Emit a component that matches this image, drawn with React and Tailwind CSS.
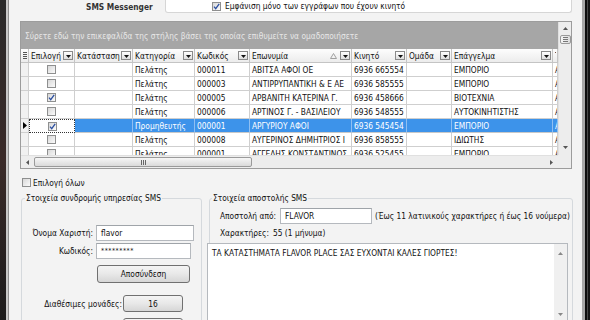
import React from "react";

const rows = [
  { chk: false, cat: "Πελάτης", code: "000011", name: "ΑΒΙΤΣΑ ΑΦΟΙ ΟΕ", mob: "6936 665554", job: "ΕΜΠΟΡΙΟ" },
  { chk: false, cat: "Πελάτης", code: "000003", name: "ΑΝΤΙΡΡΥΠΑΝΤΙΚΗ & Ε  ΑΕ", mob: "6936 585555", job: "ΕΜΠΟΡΙΟ" },
  { chk: true, cat: "Πελάτης", code: "000005", name: "ΑΡΒΑΝΙΤΗ ΚΑΤΕΡΙΝΑ Γ.", mob: "6936 458666", job: "ΒΙΟΤΕΧΝΙΑ" },
  { chk: false, cat: "Πελάτης", code: "000006", name: "ΑΡΤΙΝΟΣ Γ. - ΒΑΣΙΛΕΙΟΥ", mob: "6936 548555", job: "ΑΥΤΟΚΙΝΗΤΙΣΤΗΣ" },
  { chk: true, cat: "Προμηθευτής", code: "000001", name: "ΑΡΓΥΡΙΟΥ ΑΦΟΙ", mob: "6936 545454", job: "ΕΜΠΟΡΙΟ", sel: true },
  { chk: false, cat: "Πελάτης", code: "000008", name: "ΑΥΓΕΡΙΝΟΣ ΔΗΜΗΤΡΙΟΣ Ι", mob: "6936 858555", job: "ΙΔΙΩΤΗΣ" },
  { chk: false, cat: "Πελάτης", code: "000001", name: "ΑΓΓΕΛΗΣ ΚΩΝΣΤΑΝΤΙΝΟΣ", mob: "6936 525455", job: "ΕΜΠΟΡΙΟ" },
];

function Check({ checked }) {
  return (
    <span className="w-[9px] h-[9px] shrink-0 border border-[#8e8f8f] bg-linear-to-br from-[#d8d8d8] to-[#fbfbfb] flex items-center justify-center">
      {checked && (
        <svg width="7" height="7" viewBox="0 0 7 7">
          <path d="M1 3.6 L2.7 5.6 L6.2 0.8" stroke="#2b4fa0" strokeWidth="1.3" fill="none" />
        </svg>
      )}
    </span>
  );
}

function DropBtn() {
  return (
    <span className="w-[10px] h-[9px] shrink-0 border border-[#8a8a8a] bg-linear-to-b from-white to-[#dedede] flex items-end justify-center pb-[1px]">
      <svg width="5" height="3" viewBox="0 0 5 3">
        <path d="M0 0h5L2.5 3z" fill="#111" />
      </svg>
    </span>
  );
}

function Head({ w, label, sort }) {
  return (
    <div className={`${w} shrink-0 h-full border-r border-b border-[#c4c4c4] bg-linear-to-b from-[#fdfdfd] to-[#ececec] flex items-center pl-[2px] pr-[1px] overflow-hidden whitespace-nowrap`}>
      <span className="flex-1 overflow-hidden">{label}</span>
      {sort && (
        <svg width="7" height="6" viewBox="0 0 7 6" className="mr-[3px]">
          <path d="M3.5 0.5 L6.5 5.5 H0.5 Z" stroke="#a0a0a0" fill="none" />
        </svg>
      )}
      {label !== "Τ" && <DropBtn />}
    </div>
  );
}

function Cell({ w, sel, children }) {
  return (
    <div
      className={`${w} shrink-0 h-full border-r border-b overflow-hidden whitespace-nowrap pl-[2px] flex items-center ${
        sel ? "bg-[#3d93ea] text-white border-r-[#8fbff2] border-b-[#c8c8c8]" : "border-[#cfcfcf]"
      }`}
    >
      {children}
    </div>
  );
}

function Button({ children, className }) {
  return (
    <div className={`${className} border border-[#707070] rounded-[3px] bg-linear-to-b from-[#f4f4f4] via-[#e8e8e8] to-[#d6d6d6] flex items-center justify-center text-[#111]`}>
      {children}
    </div>
  );
}

export default function App() {
  return (
    <div className="w-[590px] h-[320px] overflow-hidden flex bg-[#111] font-['DejaVu_Sans_Condensed','DejaVu_Sans',sans-serif] text-[8.3px] leading-[10px] text-[#111]">
      {/* left desktop edge */}
      <div className="w-[6px] bg-linear-to-b from-[#2a2a2a] via-[#3a2a28] to-[#1c1c1c]" />
      <div className="w-[3px] bg-[#c9c9c9] border-r border-[#8f8f8f]" />

      {/* window body */}
      <div className="w-[573px] bg-[#f3f3f3] flex flex-col pl-[11px]">
        {/* top bar */}
        <div className="h-[13px] flex items-start">
          <div className="ml-[66px] w-[79px] h-[13px] flex items-center font-bold text-[#333] whitespace-nowrap">SMS Messenger</div>
          <div className="w-[407px] h-[13px] bg-white border-x border-b border-[#d6d6d6] rounded-b-[3px] flex items-center pl-[46px] gap-[4px]">
            <Check checked />
            <span>Εμφάνιση μόνο των εγγράφων που έχουν κινητό</span>
          </div>
        </div>

        {/* grid */}
        <div className="mt-[8px] w-[552px] h-[148px] border border-[#9c9c9c] bg-white flex flex-col">
          <div className="flex h-[133px]">
            <div className="w-[537px] flex flex-col overflow-hidden">
              <div className="h-[27px] shrink-0 bg-[#a6a6a6] text-[#e6e6e6] flex items-center pl-[4px] whitespace-nowrap">
                Σύρετε εδώ την επικεφαλίδα της στήλης βάσει της οποίας επιθυμείτε να ομαδοποιήσετε
              </div>
              <div className="h-[14px] shrink-0 flex">
                <div className="w-[8px] shrink-0 h-full border-r border-b border-[#c4c4c4] bg-linear-to-b from-[#fdfdfd] to-[#ececec] flex flex-col justify-center items-center gap-[1px]">
                  <span className="w-[4px] h-[1px] bg-[#555]" />
                  <span className="w-[4px] h-[1px] bg-[#555]" />
                  <span className="w-[4px] h-[1px] bg-[#555]" />
                  <span className="w-[4px] h-[1px] bg-[#555]" />
                </div>
                <Head w="w-[46px]" label="Επιλογή" />
                <Head w="w-[58px]" label="Κατάσταση" />
                <Head w="w-[62px]" label="Κατηγορία" />
                <Head w="w-[55px]" label="Κωδικός" />
                <Head w="w-[102px]" label="Επωνυμία" sort />
                <Head w="w-[55px]" label="Κινητό" />
                <Head w="w-[45px]" label="Ομάδα" />
                <Head w="w-[101px]" label="Επάγγελμα" />
                <Head w="w-[5px]" label="Τ" />
              </div>
              {rows.map((r, i) => (
                <div key={i} className="h-[14px] shrink-0 flex">
                  <div className="w-[8px] shrink-0 h-full border-r border-b border-[#cfcfcf] bg-[#f1f1f1] flex items-center justify-center">
                    {r.sel && (
                      <svg width="4" height="7" viewBox="0 0 4 7">
                        <path d="M0 0 L4 3.5 L0 7 Z" fill="#000" />
                      </svg>
                    )}
                  </div>
                  <div
                    className={`w-[46px] shrink-0 h-full flex items-center justify-center ${
                      r.sel ? "border border-dotted border-[#333]" : "border-r border-b border-[#cfcfcf]"
                    }`}
                  >
                    <Check checked={r.chk} />
                  </div>
                  <Cell w="w-[58px]" sel={r.sel} />
                  <Cell w="w-[62px]" sel={r.sel}>{r.cat}</Cell>
                  <Cell w="w-[55px]" sel={r.sel}>{r.code}</Cell>
                  <Cell w="w-[102px]" sel={r.sel}>{r.name}</Cell>
                  <Cell w="w-[55px]" sel={r.sel}>{r.mob}</Cell>
                  <Cell w="w-[45px]" sel={r.sel} />
                  <Cell w="w-[101px]" sel={r.sel}>{r.job}</Cell>
                  <Cell w="w-[5px]" sel={r.sel}>Α</Cell>
                </div>
              ))}
            </div>
            {/* vertical scrollbar */}
            <div className="w-[13px] bg-[#ededed] border-l border-[#e0e0e0] flex flex-col items-center">
              <svg width="5" height="3" viewBox="0 0 5 3" className="mt-[5px]">
                <path d="M0 3h5L2.5 0z" fill="#555" />
              </svg>
              <div className="mt-[5px] w-[11px] h-[9px] border border-[#9a9a9a] rounded-[2px] bg-linear-to-r from-[#f6f6f6] to-[#dcdcdc] flex flex-col items-center justify-center gap-[1px]">
                <span className="w-[5px] h-[1px] bg-[#777]" />
                <span className="w-[5px] h-[1px] bg-[#777]" />
                <span className="w-[5px] h-[1px] bg-[#777]" />
              </div>
              <div className="flex-1" />
              <svg width="5" height="3" viewBox="0 0 5 3" className="mb-[6px]">
                <path d="M0 0h5L2.5 3z" fill="#555" />
              </svg>
            </div>
          </div>
          {/* horizontal scrollbar */}
          <div className="flex h-[13px]">
            <div className="w-[537px] bg-[#ededed] border-t border-[#e0e0e0] flex items-center">
              <svg width="3" height="5" viewBox="0 0 3 5" className="ml-[5px]">
                <path d="M3 0v5L0 2.5z" fill="#555" />
              </svg>
              <div className="ml-[5px] w-[218px] h-[10px] border border-[#9a9a9a] rounded-[2px] bg-linear-to-b from-[#f6f6f6] to-[#dadada] flex items-center justify-center gap-[1px]">
                <span className="w-[1px] h-[5px] bg-[#666]" />
                <span className="w-[1px] h-[5px] bg-[#666]" />
                <span className="w-[1px] h-[5px] bg-[#666]" />
              </div>
              <div className="flex-1" />
              <svg width="3" height="5" viewBox="0 0 3 5" className="mr-[5px]">
                <path d="M0 0v5L3 2.5z" fill="#555" />
              </svg>
            </div>
            <div className="w-[13px] bg-[#ededed]" />
          </div>
        </div>

        {/* select all */}
        <div className="mt-[9px] ml-[2px] flex items-center gap-[2px] h-[9px]">
          <Check />
          <span>Επιλογή όλων</span>
        </div>

        {/* group boxes */}
        <div className="mt-[6px] flex gap-[7px] ml-[1px]">
          <fieldset className="w-[181px] h-[140px] border border-[#d5d9dd] rounded-[3px] shrink-0">
            <legend className="ml-[3px] px-[1px] leading-[10px]">Στοιχεία συνδρομής υπηρεσίας SMS</legend>
            <div className="mt-[22px] flex items-center">
              <div className="w-[71px] text-right">Όνομα Χαριστή:</div>
              <div className="ml-[3px] w-[98px] h-[16px] border border-[#b5b9be] border-t-[#9fa4a9] bg-white flex items-center pl-[4px]">flavor</div>
            </div>
            <div className="mt-[2px] flex items-center">
              <div className="w-[71px] text-right">Κωδικός:</div>
              <div className="ml-[3px] w-[95px] h-[16px] border border-[#b5b9be] border-t-[#9fa4a9] bg-white flex items-center pl-[4px] text-[7px] tracking-[0.5px]">*********</div>
            </div>
            <Button className="mt-[6px] ml-[75px] w-[93px] h-[18px]">Αποσύνδεση</Button>
            <div className="mt-[12px] flex items-center">
              <div className="w-[100px] text-right whitespace-nowrap">Διαθέσιμες μονάδες:</div>
              <Button className="ml-[1px] w-[60px] h-[17px]">16</Button>
            </div>
            <div className="mt-[6px] flex items-center">
              <div className="w-[100px] text-right whitespace-nowrap">Κόστος μηνύματος:</div>
              <Button className="ml-[1px] w-[60px] h-[17px]">1</Button>
            </div>
          </fieldset>

          <fieldset className="w-[364px] h-[140px] border border-[#d5d9dd] rounded-[3px] shrink-0">
            <legend className="ml-[2px] px-[1px] leading-[10px]">Στοιχεία αποστολής SMS</legend>
            <div className="mt-[5px] flex items-center pl-[10px] whitespace-nowrap">
              <div className="w-[60px]">Αποστολή από:</div>
              <div className="w-[92px] h-[16px] border border-[#b5b9be] border-t-[#9fa4a9] bg-white flex items-center pl-[4px]">FLAVOR</div>
              <div className="ml-[3px]">(Έως 11 λατινικούς χαρακτήρες ή έως 16 νούμερα)</div>
            </div>
            <div className="mt-[4px] flex items-center pl-[10px] h-[10px] whitespace-nowrap">
              <div className="w-[53px]">Χαρακτήρες:</div>
              <div>55 (1 μήνυμα)</div>
            </div>
            <div className="mt-[5px] ml-[-3px] w-[361px] h-[90px] border border-[#b5b9be] bg-white flex">
              <div className="flex-1 pl-[4px] pt-[4px]">ΤΑ ΚΑΤΑΣΤΗΜΑΤΑ FLAVOR PLACE ΣΑΣ ΕΥΧΟΝΤΑΙ ΚΑΛΕΣ ΓΙΟΡΤΕΣ!</div>
              <div className="w-[13px] bg-[#f0f0f0] flex flex-col items-center">
                <svg width="5" height="3" viewBox="0 0 5 3" className="mt-[8px]">
                  <path d="M0 3h5L2.5 0z" fill="#888" />
                </svg>
                <svg width="5" height="3" viewBox="0 0 5 3" className="mt-[58px]">
                  <path d="M0 0h5L2.5 3z" fill="#888" />
                </svg>
              </div>
            </div>
          </fieldset>
        </div>
      </div>

      {/* right desktop edge */}
      <div className="w-[3px] bg-[#a8a8a8]" />
      <div className="w-[2px] bg-[#0e0e0e]" />
      <div className="w-[1px] bg-[#4a4a4a]" />
      <div className="flex-1 bg-[#141414]" />
    </div>
  );
}
